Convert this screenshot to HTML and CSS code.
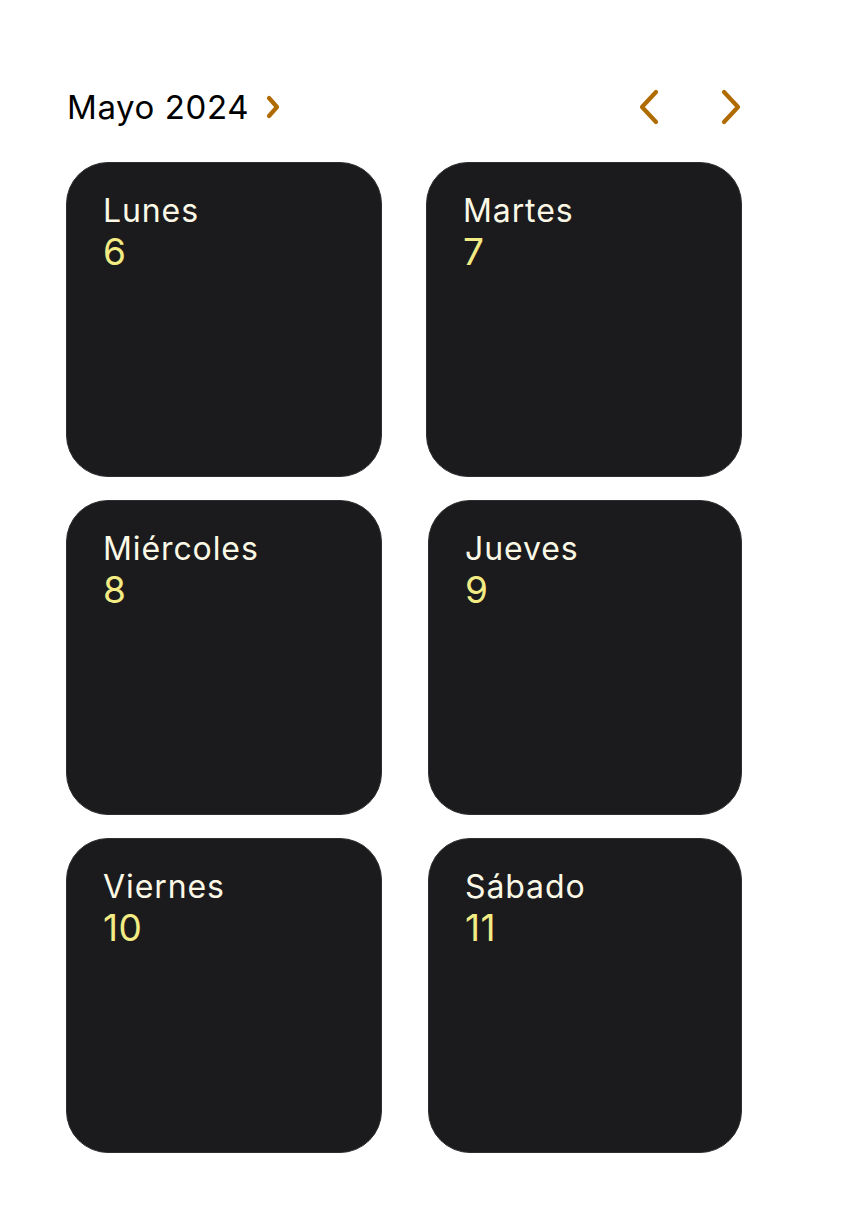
FILE: index.html
```html
<!DOCTYPE html>
<html lang="es">
<head>
    <meta charset="UTF-8">
    <meta name="viewport" content="width=device-width, initial-scale=1.0">
    <title>Semana</title>
    <link rel="stylesheet" href="styles.css">
</head>
<body>
    <div class="page">
        <div class="header">
            <button class="month">
                <span>Mayo 2024</span>
                <svg class="chev-small" viewBox="0 0 16 24" width="16" height="24"><path d="M4 3 L12 12 L4 21" /></svg>
            </button>
            <div class="nav">
                <button class="nav-btn"><svg viewBox="0 0 22 36" width="22" height="36"><path d="M18 3 L4 18 L18 33" /></svg></button>
                <button class="nav-btn"><svg viewBox="0 0 22 36" width="22" height="36"><path d="M4 3 L18 18 L4 33" /></svg></button>
            </div>
        </div>
        <div class="days">
            <div class="day"><div class="day-name">Lunes</div><div class="day-num">6</div></div>
            <div class="day"><div class="day-name">Martes</div><div class="day-num">7</div></div>
            <div class="day"><div class="day-name">Miércoles</div><div class="day-num">8</div></div>
            <div class="day right"><div class="day-name">Jueves</div><div class="day-num">9</div></div>
            <div class="day"><div class="day-name">Viernes</div><div class="day-num">10</div></div>
            <div class="day right"><div class="day-name">Sábado</div><div class="day-num">11</div></div>
        </div>
    </div>
</body>
</html>
```

FILE: styles.css
```css
body {
    margin: 0;
    padding: 0;
    background: #fff;
    font-family: Inter, "Noto Sans", sans-serif;
}

.page {
    padding: 86px 0 0 66px;
    width: 676px;
}

.header {
    display: flex;
    align-items: center;
    justify-content: space-between;
    height: 42px;
    margin-bottom: 34px;
}

.month {
    display: flex;
    align-items: center;
    gap: 16px;
    background: none;
    border: none;
    padding: 0 0 0 1px;
    font-family: inherit;
    font-size: 33px;
    color: #000;
    letter-spacing: 0.6px;
}

.chev-small path,
.nav-btn path {
    fill: none;
    stroke: #b06b00;
    stroke-width: 4.2;
    stroke-linecap: round;
    stroke-linejoin: round;
}

.nav {
    display: flex;
    gap: 60px;
}

.nav-btn {
    background: none;
    border: none;
    padding: 0;
    display: flex;
}

.days {
    display: grid;
    grid-template-columns: repeat(2, 316px);
    column-gap: 44px;
    row-gap: 23px;
}

.day {
    height: 315px;
    background: #1b1b1d;
    border: 1px solid #2e2e30;
    border-radius: 42px;
    box-sizing: border-box;
    padding: 28px 36px;
}

.day.right {
    margin-left: 2px;
}

.day-name {
    color: #fbf8e6;
    font-size: 32px;
    line-height: 40px;
    letter-spacing: 0.9px;
}

.day-num {
    color: #f3ec84;
    font-size: 37px;
    line-height: 42px;
    letter-spacing: 0.5px;
}
```
